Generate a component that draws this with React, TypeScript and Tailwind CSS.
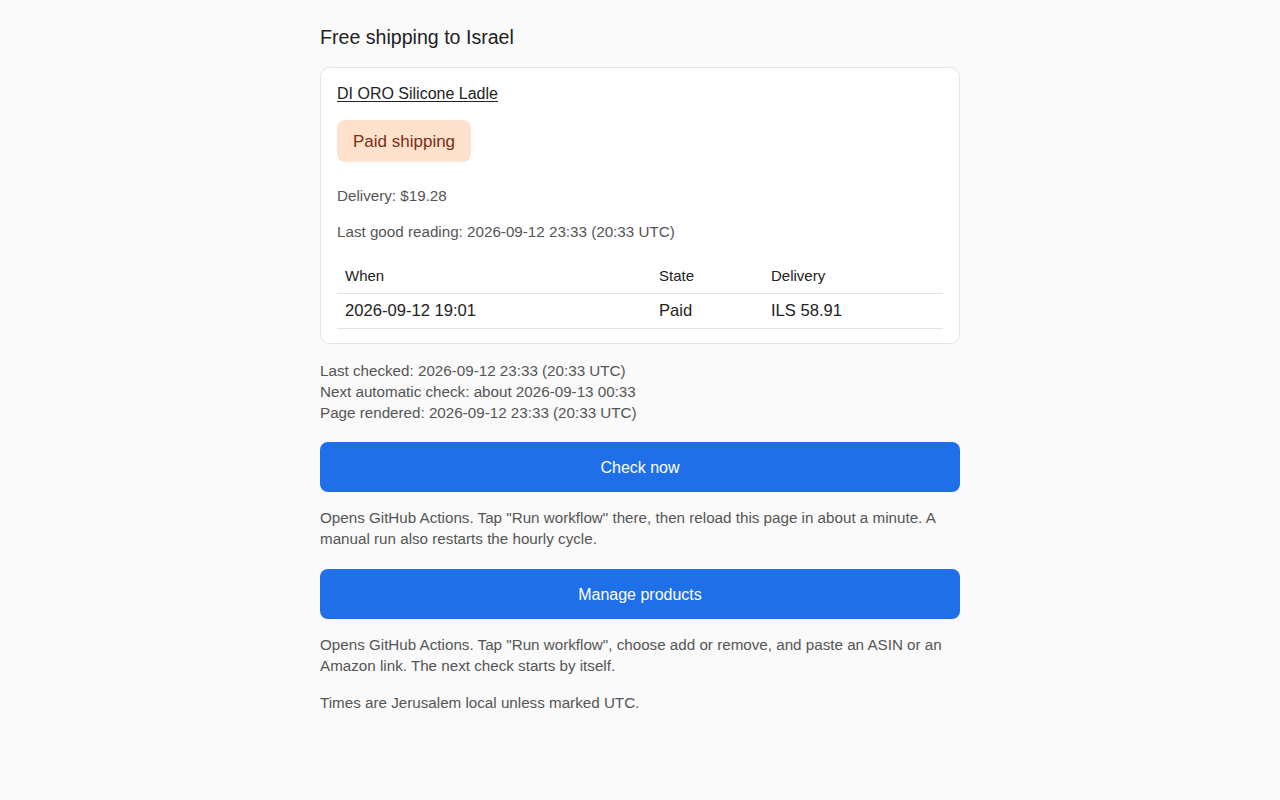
const readings = [{ when: "2026-09-12 19:01", state: "Paid", delivery: "ILS 58.91" }];

export default function App() {
  return (
    <main className="min-h-screen bg-[#fafafa] pt-6 pb-10 font-['Liberation_Sans',Arial,sans-serif] text-[#222]">
      <div className="w-[640px] mx-auto">
        <h1 className="text-[19.6px] leading-[26px] font-normal mb-[17px]">Free shipping to Israel</h1>

        {/* Product card */}
        <div className="bg-white border border-[#e3e3e3] rounded-[10px] px-4 pt-4 pb-[14px]">
          <a href="#" className="block text-[16px] leading-5 underline underline-offset-2 text-[#222]">
            DI ORO Silicone Ladle
          </a>
          <span className="inline-block mt-4 bg-[#fee2cd] text-[#7c2d12] rounded-lg px-4 pt-[11px] pb-[9px] text-[17px] leading-[22px]">
            Paid shipping
          </span>
          <p className="mt-[23px] text-[15.2px] leading-[21px] text-[#555]">Delivery: $19.28</p>
          <p className="mt-[15px] text-[15.2px] leading-[21px] text-[#555]">
            Last good reading: 2026-09-12 23:33 (20:33 UTC)
          </p>
          <table className="mt-[16px] w-full border-collapse text-left">
            <thead>
              <tr className="border-b border-[#e2e2e2]">
                <th className="w-[314px] px-2 py-[7px] text-[15px] leading-[21px] font-normal">When</th>
                <th className="w-[112px] px-2 py-[7px] text-[15px] leading-[21px] font-normal">State</th>
                <th className="px-2 py-[7px] text-[15px] leading-[21px] font-normal">Delivery</th>
              </tr>
            </thead>
            <tbody>
              {readings.map((r) => (
                <tr key={r.when} className="border-b border-[#e2e2e2]">
                  <td className="px-2 py-[7px] text-[16.6px] leading-[20px]">{r.when}</td>
                  <td className="px-2 py-[7px] text-[16.6px] leading-[20px]">{r.state}</td>
                  <td className="px-2 py-[7px] text-[16.6px] leading-[20px]">{r.delivery}</td>
                </tr>
              ))}
            </tbody>
          </table>
        </div>

        {/* Status */}
        <div className="mt-4 text-[15.2px] leading-[21px] text-[#555]">
          <p>Last checked: 2026-09-12 23:33 (20:33 UTC)</p>
          <p>Next automatic check: about 2026-09-13 00:33</p>
          <p>Page rendered: 2026-09-12 23:33 (20:33 UTC)</p>
        </div>

        <button className="mt-[19px] w-full h-[50px] pt-[2px] rounded-lg bg-[#1f6fe8] text-white text-[16px]">
          Check now
        </button>
        <p className="mt-[15px] text-[15.2px] leading-[21px] text-[#555]">
          Opens GitHub Actions. Tap "Run workflow" there, then reload this page in about a minute. A manual run also
          restarts the hourly cycle.
        </p>

        <button className="mt-5 w-full h-[50px] pt-[2px] rounded-lg bg-[#1f6fe8] text-white text-[16px]">
          Manage products
        </button>
        <p className="mt-[15px] text-[15.2px] leading-[21px] text-[#555]">
          Opens GitHub Actions. Tap "Run workflow", choose add or remove, and paste an ASIN or an Amazon link. The next
          check starts by itself.
        </p>

        <p className="mt-4 text-[15.2px] leading-[21px] text-[#555]">Times are Jerusalem local unless marked UTC.</p>
      </div>
    </main>
  );
}
